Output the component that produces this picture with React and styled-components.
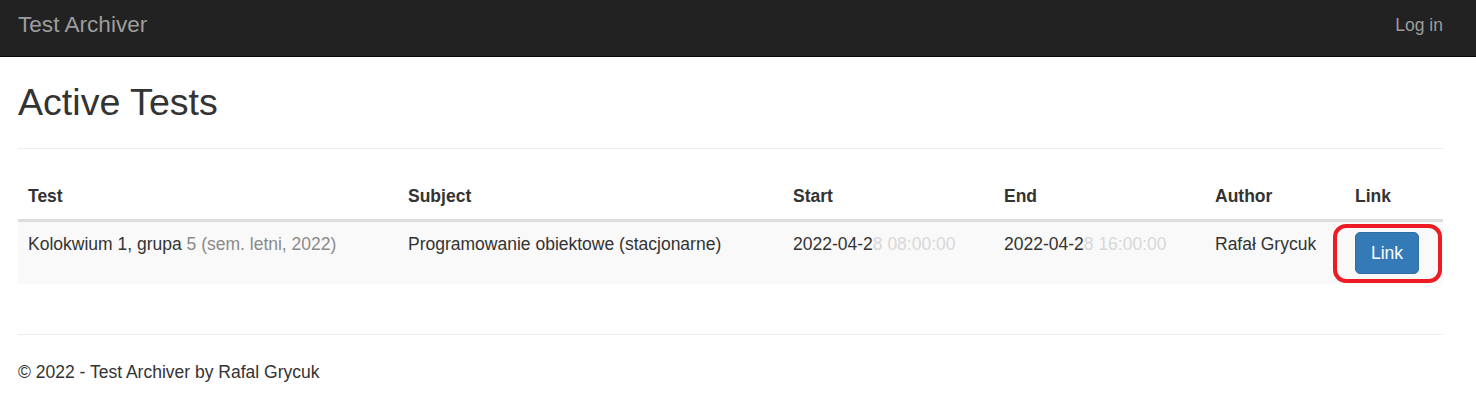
import React from "react";
import styled, { createGlobalStyle } from "styled-components";

const GlobalStyle = createGlobalStyle`
  body {
    margin: 0;
    font-family: "Liberation Sans", Arial, sans-serif;
    font-size: 17.5px;
    line-height: 25px;
    color: #333;
    background: #fff;
  }
`;

const Navbar = styled.nav`
  height: 56px;
  background: #222;
  border-bottom: 1px solid #080808;
  display: flex;
  justify-content: space-between;
  align-items: flex-start;
  padding: 0 33px 0 18px;
`;

const Brand = styled.a`
  font-size: 22.6px;
  line-height: 22px;
  padding-top: 14px;
  color: #9d9d9d;
  text-decoration: none;
`;

const NavLink = styled.a`
  line-height: 25px;
  padding-top: 13px;
  color: #9d9d9d;
  text-decoration: none;
`;

const Content = styled.main`
  padding: 0 33px 0 18px;
`;

const Title = styled.h1`
  font-size: 37.6px;
  font-weight: 500;
  line-height: 40px;
  margin: 25px 0 12px;
`;

const Rule = styled.hr`
  margin: 26px 0 25px;
  border: 0;
  border-top: 1px solid #eee;
`;

const Table = styled.table`
  width: 100%;
  border-collapse: collapse;
  border-spacing: 0;
  table-layout: fixed;
  margin-bottom: 50px;
`;

const Th = styled.th`
  box-sizing: border-box;
  width: ${(p) => p.$w}px;
  text-align: left;
  font-weight: bold;
  padding: 10px;
  line-height: 25px;
  vertical-align: bottom;
  border-bottom: 3px solid #ddd;
`;

const Row = styled.tr`
  background: #f9f9f9;
`;

const Td = styled.td`
  padding: 10px;
  height: 42px;
  line-height: 25px;
  vertical-align: top;
  white-space: nowrap;
`;

const Faded = styled.span`
  color: ${(p) => p.$tone};
`;

const Marked = styled.span`
  position: relative;
  display: inline-block;
  vertical-align: top;

  &::after {
    content: "";
    position: absolute;
    top: -8.5px;
    bottom: -8.5px;
    left: -22px;
    right: -22.5px;
    border: 4px solid #ed1c24;
    border-radius: 13px;
    pointer-events: none;
  }
`;

const Button = styled.a`
  display: block;
  padding: 7.5px 15px;
  line-height: 25px;
  color: #fff;
  background: #337ab7;
  border: 1px solid #2e6da4;
  border-radius: 5px;
  text-decoration: none;
`;

const Footer = styled.footer`
  p {
    margin: 0;
  }
`;

const columns = [
  ["Test", 380],
  ["Subject", 385],
  ["Start", 211],
  ["End", 211],
  ["Author", 140],
  ["Link", 98],
];

export default function App() {
  return (
    <>
      <GlobalStyle />
      <Navbar>
        <Brand href="#">Test Archiver</Brand>
        <NavLink href="#">Log in</NavLink>
      </Navbar>
      <Content>
        <Title>Active Tests</Title>
        <Rule />
        <Table>
          <thead>
            <tr>
              {columns.map(([name, w]) => (
                <Th key={name} $w={w}>
                  {name}
                </Th>
              ))}
            </tr>
          </thead>
          <tbody>
            <Row>
              <Td>
                Kolokwium 1, grupa <Faded $tone="#8a8a8a">5 (sem. letni, 2022)</Faded>
              </Td>
              <Td>Programowanie obiektowe (stacjonarne)</Td>
              <Td>
                2022-04-2<Faded $tone="#d8d8d8">8 08:00:00</Faded>
              </Td>
              <Td>
                2022-04-2<Faded $tone="#d8d8d8">8 16:00:00</Faded>
              </Td>
              <Td>Rafał Grycuk</Td>
              <Td>
                <Marked>
                  <Button href="#">Link</Button>
                </Marked>
              </Td>
            </Row>
          </tbody>
        </Table>
        <Rule />
        <Footer>
          <p>© 2022 - Test Archiver by Rafal Grycuk</p>
        </Footer>
      </Content>
    </>
  );
}
